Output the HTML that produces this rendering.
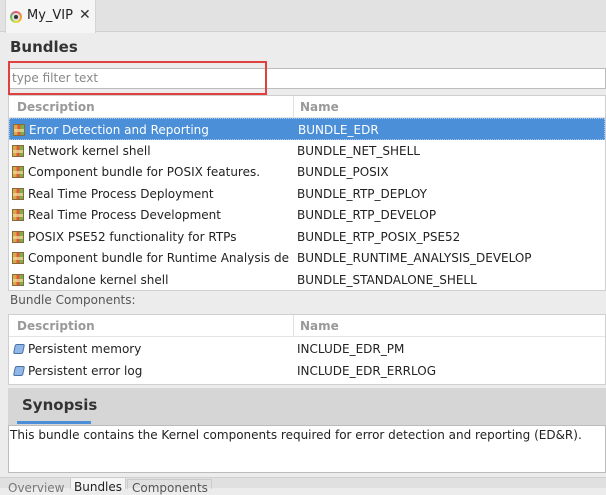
<!DOCTYPE html>
<html><head><meta charset="utf-8"><style>
*{margin:0;padding:0;box-sizing:border-box}
body{width:606px;height:488px;overflow:hidden;background:#ececec;font-family:"DejaVu Sans","Liberation Sans",sans-serif;font-size:12px;color:#222;position:relative}
.a{position:absolute}
.row{position:absolute;left:0;right:0;height:22px;line-height:22px;white-space:nowrap}
.row .d{position:absolute;left:19px}
.row .n{position:absolute;left:288px}
.ic{position:absolute;left:3px;top:5px;width:12px;height:12px;border:1px solid #8a6a3a;background:linear-gradient(90deg,#d8a84a 0 33%,#e05a3a 33% 66%,#7ab04a 66%);}
.ic::after{content:"";position:absolute;left:0;right:0;top:4px;height:3px;background:#f0e0a0;opacity:.7}
.ic2{position:absolute;left:5px;top:6px;width:10px;height:10px;border:1px solid #4a70a0;background:#8fb8e8;border-radius:2px;transform:skewX(-12deg)}
.hdr{position:absolute;left:0;right:0;height:22px;line-height:22px;color:#999;font-weight:bold;border-bottom:1px solid #e4e4e4}
</style></head><body>
<div class="a" style="left:0;top:0;width:606px;height:32px;background:#e2e2e2;border-bottom:1px solid #d0d0d0"></div>
<div class="a" style="left:5px;top:0;width:91px;height:33px;background:#f5f5f5;border-left:1px solid #d4d4d4;border-right:1px solid #d4d4d4"></div>
<div class="a" style="left:10px;top:11px;width:12px;height:12px;border-radius:50%;background:conic-gradient(#e84a7a,#f0a030,#e8e040,#60c060,#e84a7a)"></div>
<div class="a" style="left:12px;top:13px;width:8px;height:8px;border-radius:50%;background:#333;border:2px solid #ddd"></div>
<div class="a" style="left:27px;top:8px;font-size:13px;color:#222">My_VIP</div>
<div class="a" style="left:79px;top:7px;font-size:14px;color:#333">✕</div>
<div class="a" style="left:10px;top:38px;font-size:15px;font-weight:bold;color:#333">Bundles</div>
<div class="a" style="left:8px;top:68px;width:598px;height:21px;background:#fff;border:1px solid #bcbcbc"></div>
<div class="a" style="left:12px;top:71px;color:#888">type filter text</div>
<div class="a" style="left:8px;top:61px;width:259px;height:34px;border:2px solid #e04040"></div>
<div class="a" style="left:8px;top:95px;width:598px;height:196px;background:#fff;border:1px solid #cfcfcf;overflow:hidden">
 <div class="hdr" style="top:0"><span class="a" style="left:8px">Description</span><span class="a" style="left:291px">Name</span></div>
 <div class="a" style="left:284px;top:0;width:1px;height:22px;background:#e0e0e0"></div>
 <div class="row" style="top:22px;background:#4a8fd8;color:#fff;border:1px dotted #a8c8f0"><i class="ic"></i><span class="d">Error Detection and Reporting</span><span class="n">BUNDLE_EDR</span></div>
 <div class="row" style="top:44px"><i class="ic"></i><span class="d">Network kernel shell</span><span class="n">BUNDLE_NET_SHELL</span></div>
 <div class="row" style="top:65px"><i class="ic"></i><span class="d">Component bundle for POSIX features.</span><span class="n">BUNDLE_POSIX</span></div>
 <div class="row" style="top:87px"><i class="ic"></i><span class="d">Real Time Process Deployment</span><span class="n">BUNDLE_RTP_DEPLOY</span></div>
 <div class="row" style="top:108px"><i class="ic"></i><span class="d">Real Time Process Development</span><span class="n">BUNDLE_RTP_DEVELOP</span></div>
 <div class="row" style="top:130px"><i class="ic"></i><span class="d">POSIX PSE52 functionality for RTPs</span><span class="n">BUNDLE_RTP_POSIX_PSE52</span></div>
 <div class="row" style="top:151px"><i class="ic"></i><span class="d" style="width:265px;overflow:hidden">Component bundle for Runtime Analysis de</span><span class="n">BUNDLE_RUNTIME_ANALYSIS_DEVELOP</span></div>
 <div class="row" style="top:173px"><i class="ic"></i><span class="d">Standalone kernel shell</span><span class="n">BUNDLE_STANDALONE_SHELL</span></div>
</div>
<div class="a" style="left:10px;top:293px;color:#555">Bundle Components:</div>
<div class="a" style="left:8px;top:314px;width:598px;height:71px;background:#fff;border:1px solid #cfcfcf;overflow:hidden">
 <div class="hdr" style="top:0"><span class="a" style="left:8px">Description</span><span class="a" style="left:291px">Name</span></div>
 <div class="a" style="left:284px;top:0;width:1px;height:22px;background:#e0e0e0"></div>
 <div class="row" style="top:23px"><i class="ic2"></i><span class="d">Persistent memory</span><span class="n">INCLUDE_EDR_PM</span></div>
 <div class="row" style="top:45px"><i class="ic2"></i><span class="d">Persistent error log</span><span class="n">INCLUDE_EDR_ERRLOG</span></div>
</div>
<div class="a" style="left:8px;top:388px;width:598px;height:37px;background:#d6d6d6"></div>
<div class="a" style="left:22px;top:396px;font-size:15px;font-weight:bold;color:#333">Synopsis</div>
<div class="a" style="left:17px;top:421px;width:74px;height:3px;background:#4a8fd8"></div>
<div class="a" style="left:8px;top:425px;width:598px;height:48px;background:#fff;border:1px solid #bcbcbc"></div>
<div class="a" style="left:10px;top:428px;color:#222">This bundle contains the Kernel components required for error detection and reporting (ED&amp;R).</div>
<div class="a" style="left:0;top:477px;width:606px;height:11px;background:#e0e0e0;border-top:1px solid #d0d0d0"></div>
<div class="a" style="left:8px;top:481px;color:#777">Overview</div>
<div class="a" style="left:70px;top:477px;width:56px;height:12px;background:#f5f5f5;border:1px solid #ccc;border-bottom:none"></div>
<div class="a" style="left:74px;top:480px;color:#222">Bundles</div>
<div class="a" style="left:127px;top:479px;width:85px;height:10px;border:1px solid #ccc;border-bottom:none"></div>
<div class="a" style="left:132px;top:481px;color:#555">Components</div>
</body></html>
